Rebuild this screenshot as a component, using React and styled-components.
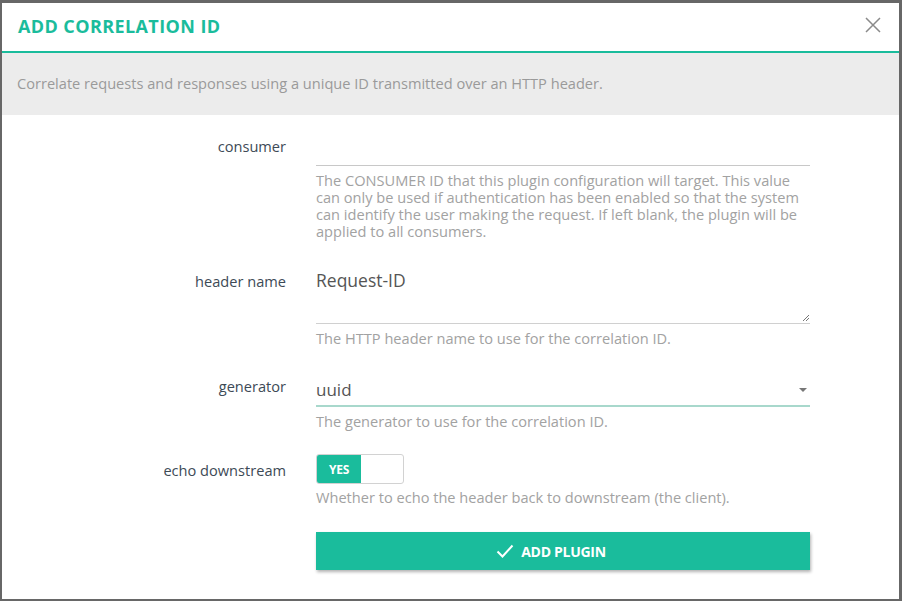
import React from "react";
import styled, { createGlobalStyle } from "styled-components";

const Global = createGlobalStyle`
  html, body { margin: 0; padding: 0; background: #666; }
  body { font-family: "Open Sans", "Liberation Sans", sans-serif; }
  * { box-sizing: border-box; }
`;

const Backdrop = styled.div`
  width: 902px;
  height: 601px;
  background: #676767;
  padding: 3px 3px 2px 2px;
`;

const Modal = styled.div`
  width: 897px;
  height: 596px;
  background: #fff;
  display: flex;
  flex-direction: column;
`;

const Header = styled.div`
  height: 50px;
  display: flex;
  align-items: center;
  justify-content: space-between;
  padding: 0 18px 0 16px;
  border-bottom: 2px solid #1abc9c;
`;

const Title = styled.h1`
  margin: 0;
  font-family: "Open Sans", sans-serif;
  font-size: 18px;
  font-weight: 700;
  color: #1abc9c;
  letter-spacing: 0.4px;
  margin-top: -2px;
`;

const Close = styled.button`
  border: 0;
  background: none;
  padding: 0;
  width: 16px;
  height: 16px;
  display: flex;
  margin-top: -4px;
`;

const Description = styled.div`
  height: 62px;
  background: #ececec;
  display: flex;
  align-items: center;
  padding: 0 15px 3px;
  font-size: 14.6px;
  color: #9a9a9a;
`;

const Form = styled.div`
  padding: 17px 0 0;
  display: flex;
  flex-direction: column;
`;

const Row = styled.div`
  display: grid;
  grid-template-columns: 284px 494px;
  column-gap: 30px;
  margin-bottom: ${(p) => p.$mb || 0}px;
`;

const Label = styled.div`
  text-align: right;
  font-size: 14.6px;
  color: #3d4a56;
  line-height: 20px;
  padding-top: ${(p) => p.$pt || 0}px;
`;

const Field = styled.div`
  display: flex;
  flex-direction: column;
`;

const TextInput = styled.div`
  height: 34px;
  border-bottom: 1px solid #c8c8c8;
`;

const TextArea = styled.div`
  position: relative;
  height: 61px;
  border-bottom: 1px solid #d0d0d0;
  font-size: 17.5px;
  color: #555;
  padding-top: 5px;
  line-height: 24px;
`;

const Grip = styled.svg`
  position: absolute;
  right: 0;
  bottom: 1px;
`;

const Select = styled.div`
  height: 33px;
  border-bottom: 2px solid #a8d8cc;
  display: flex;
  align-items: center;
  justify-content: space-between;
  font-size: 17px;
  color: #555;
  padding-right: 3px;
`;

const Caret = styled.span`
  width: 0;
  height: 0;
  border-left: 4px solid transparent;
  border-right: 4px solid transparent;
  border-top: 4px solid #777;
`;

const Help = styled.div`
  font-size: 14.6px;
  line-height: 17px;
  color: #a2a2a2;
  margin-top: ${(p) => p.$mt || 0}px;
`;

const Toggle = styled.div`
  width: 88px;
  height: 30px;
  border: 1px solid #d2d2d2;
  border-radius: 3px;
  display: flex;
  overflow: hidden;
`;

const ToggleOn = styled.div`
  width: 44px;
  background: #1abc9c;
  color: #fff;
  font-size: 12px;
  font-weight: 700;
  display: flex;
  align-items: center;
  justify-content: center;
  letter-spacing: -0.3px;
`;

const Button = styled.button`
  width: 494px;
  height: 38px;
  border: 0;
  background: #1abc9c;
  color: #fff;
  font-family: "Open Sans", sans-serif;
  font-size: 14px;
  font-weight: 700;
  display: flex;
  align-items: center;
  justify-content: center;
  gap: 7px;
  padding: 0 24px 0 0;
  box-shadow: 1px 2px 3px rgba(0, 0, 0, 0.3);
  letter-spacing: -0.3px;
`;

export default function App() {
  return (
    <>
      <Global />
      <Backdrop>
        <Modal>
          <Header>
            <Title>ADD CORRELATION ID</Title>
            <Close aria-label="close">
              <svg width="16" height="16" viewBox="0 0 16 16">
                <path d="M1 1 L15 15 M15 1 L1 15" stroke="#8a8a8a" strokeWidth="1.5" fill="none" />
              </svg>
            </Close>
          </Header>
          <Description>
            Correlate requests and responses using a unique ID transmitted over an HTTP header.
          </Description>
          <Form>
            <Row $mb={23}>
              <Label $pt={4}>consumer</Label>
              <Field>
                <TextInput />
                <Help $mt={6}>
                  The CONSUMER ID that this plugin configuration will target. This value
                  can only be used if authentication has been enabled so that the system
                  can identify the user making the request. If left blank, the plugin will be
                  applied to all consumers.
                </Help>
              </Field>
            </Row>
            <Row $mb={27}>
              <Label $pt={8}>header name</Label>
              <Field>
                <TextArea>
                  Request-ID
                  <Grip width="8" height="8" viewBox="0 0 8 8">
                    <path d="M7 1 L1 7 M7 4 L4 7" stroke="#777" strokeWidth="1" fill="none" />
                  </Grip>
                </TextArea>
                <Help $mt={6}>The HTTP header name to use for the correlation ID.</Help>
              </Field>
            </Row>
            <Row $mb={24}>
              <Label $pt={2}>generator</Label>
              <Field>
                <Select>
                  uuid
                  <Caret />
                </Select>
                <Help $mt={6}>The generator to use for the correlation ID.</Help>
              </Field>
            </Row>
            <Row $mb={26}>
              <Label $pt={6}>echo downstream</Label>
              <Field>
                <Toggle>
                  <ToggleOn>YES</ToggleOn>
                </Toggle>
                <Help $mt={5}>Whether to echo the header back to downstream (the client).</Help>
              </Field>
            </Row>
            <Row>
              <div />
              <Button>
                <svg width="18" height="14" viewBox="0 0 18 14">
                  <path d="M1.5 7.5 L6.5 12.5 L16.5 1.5" stroke="#fff" strokeWidth="2" fill="none" />
                </svg>
                ADD PLUGIN
              </Button>
            </Row>
          </Form>
        </Modal>
      </Backdrop>
    </>
  );
}
